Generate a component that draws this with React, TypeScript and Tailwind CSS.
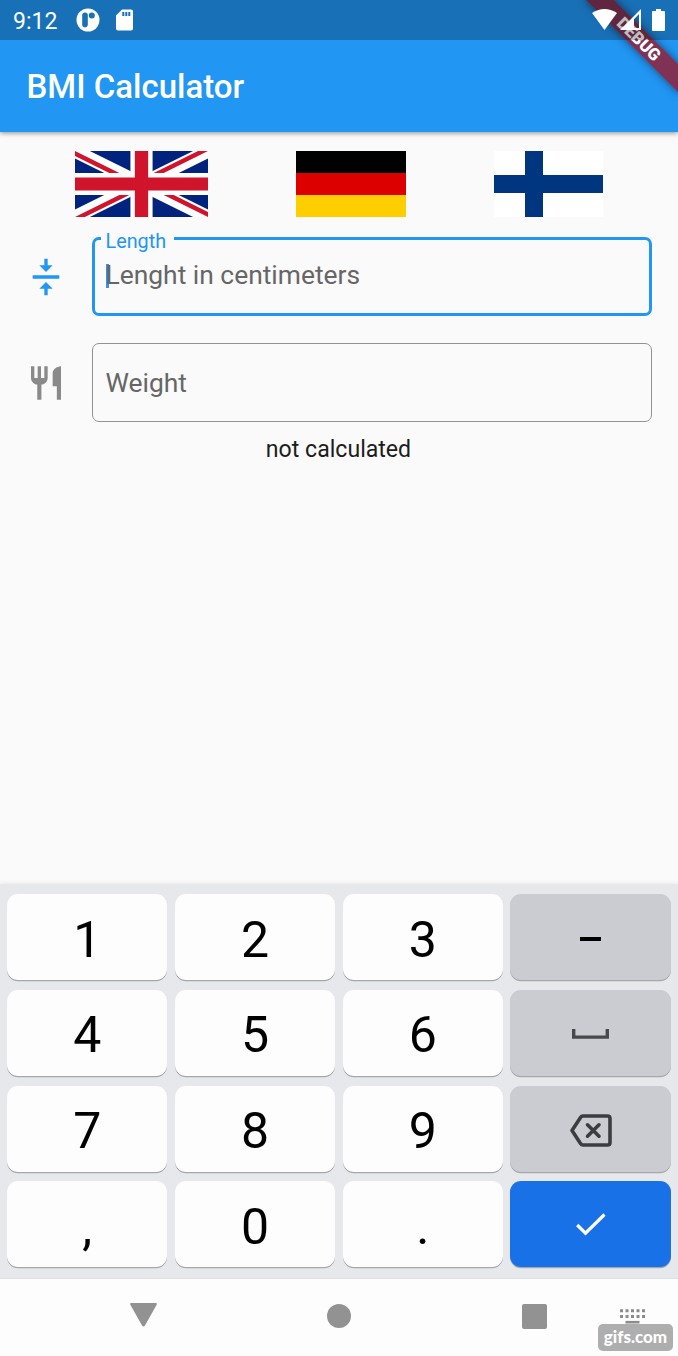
import React from "react";

function StatusBar() {
  return (
    <div className="relative z-20 flex h-[39.6px] items-center bg-black/25 text-white">
      <span className="ml-[13px] mt-[3px] w-[50px] text-[23px] leading-none">9:12</span>
      <svg className="ml-[13px]" width="24" height="24" viewBox="0 0 24 24">
        <circle cx="12" cy="12" r="11.5" fill="white" />
        <rect x="6.2" y="4.6" width="5.6" height="14.6" rx="2.8" fill="#1970b7" />
        <circle cx="15.8" cy="7.6" r="3" fill="#1970b7" />
      </svg>
      <svg className="ml-4" width="17" height="22" viewBox="0 0 17 22">
        <path
          fill="white"
          fillRule="evenodd"
          d="M6 .5H15a2 2 0 0 1 2 2V19.5a2 2 0 0 1-2 2H2a2 2 0 0 1-2-2V6.5ZM6.3 3v4h2V3ZM9.3 3v4h2V3ZM12.3 3v4h2V3Z"
        />
      </svg>
      <svg className="ml-auto" width="25" height="21" viewBox="0 0 25 21">
        <path fill="white" d="M0 4Q12.5-4 25 4L12.5 21Z" />
      </svg>
      <svg className="ml-[3px]" width="22" height="22" viewBox="0 0 22 22">
        <path fill="white" fillRule="evenodd" d="M21 0V21H0ZM19 5L14 10.2V19H19Z" />
      </svg>
      <svg className="ml-[10px] mr-[13px]" width="13" height="22" viewBox="0 0 13 22">
        <path fill="white" d="M4 0h5v2h3a1 1 0 0 1 1 1v18a1 1 0 0 1-1 1H1a1 1 0 0 1-1-1V3a1 1 0 0 1 1-1h3Z" />
      </svg>
    </div>
  );
}

function DebugBanner() {
  return (
    <div className="pointer-events-none absolute right-0 top-0 z-10 h-[132px] w-[132px] overflow-hidden">
      <div className="absolute left-[27px] top-[29px] flex h-5 w-[132px] rotate-45 items-center justify-center bg-[#a01020]/75 text-[16.8px] font-black leading-none text-white shadow-[0_0_9px_rgba(0,0,0,0.5)]">
        DEBUG
      </div>
    </div>
  );
}

function Flags() {
  return (
    <div className="flex h-[66px] pl-[75px]">
      <svg width="133" height="66" viewBox="0 0 60 30" preserveAspectRatio="none">
        <clipPath id="saltire">
          <path d="M30 15H60V30ZM30 15V30H0ZM30 15H0V0ZM30 15V0H60Z" />
        </clipPath>
        <path fill="#00247d" d="M0 0H60V30H0Z" />
        <path d="M0 0L60 30M60 0L0 30" stroke="white" strokeWidth="6" />
        <path d="M0 0L60 30M60 0L0 30" clipPath="url(#saltire)" stroke="#cf142b" strokeWidth="4" />
        <path d="M30 0V30M0 15H60" stroke="white" strokeWidth="10" />
        <path d="M30 0V30M0 15H60" stroke="#cf142b" strokeWidth="6" />
      </svg>
      <div className="ml-[88px] flex w-[110px] flex-col">
        <div className="flex-1 bg-black" />
        <div className="flex-1 bg-[#dd0000]" />
        <div className="flex-1 bg-[#ffce00]" />
      </div>
      <svg className="ml-[88px]" width="109" height="66" viewBox="0 0 109 66">
        <path fill="white" d="M0 0H109V66H0Z" />
        <path fill="#003580" d="M31 0H49V24H109V42H49V66H31V42H0V24H31Z" />
      </svg>
    </div>
  );
}

function Form() {
  return (
    <div className="flex flex-col">
      <div className="mt-5 flex h-[79px] items-center pl-[26px] pr-[26px]">
        <svg width="40" height="40" viewBox="0 0 24 24" fill="#2196f3">
          <path d="M8 19h3v4h2v-4h3l-4-4-4 4zm8-14h-3V1h-2v4H8l4 4 4-4zM4 11v2h16v-2H4z" />
        </svg>
        <div className="relative ml-[26px] h-full flex-1 rounded-[7px] border-[3px] border-[#2196f3]">
          <span className="absolute -top-[9px] left-[5.5px] bg-[#fafafa] pl-[5px] pr-[8px] text-[19.8px] leading-[22px] text-[#2196f3]">
            Length
          </span>
          <div className="flex h-[71px] items-center pl-[10.5px]">
            <span className="h-6 w-[3px] bg-[#3f8cf0]" />
            <span className="-ml-[3px] text-[26.4px] leading-none text-[#666]">Lenght in centimeters</span>
          </div>
        </div>
      </div>
      <div className="mt-[27px] flex h-[79px] items-center pl-[26px] pr-[26px]">
        <svg width="40" height="40" viewBox="0 0 24 24" fill="#8a8a8a">
          <path d="M11 9H9V2H7v7H5V2H3v7c0 2.12 1.66 3.84 3.75 3.97V22h2.5v-9.03C11.34 12.84 13 11.12 13 9V2h-2v7zm5-3v8h2.5v8H21V2c-2.76 0-5 2.24-5 4z" />
        </svg>
        <div className="ml-[26px] flex h-full flex-1 items-center rounded-[7px] border-[1.6px] border-[#929292] pl-[12.5px] pt-[2px] text-[26.4px] leading-none text-[#666]">
          Weight
        </div>
      </div>
      <p className="mt-[14px] pr-px text-center text-[23.1px] leading-[27px] text-[#1c1c1c]">not calculated</p>
    </div>
  );
}

const keyBase = "flex items-center justify-center rounded-[11px] text-[50px] leading-none text-black shadow-[0_1.3px_0_#a5a7aa]";

function Key({ label }: { label: string }) {
  return <div className={`${keyBase} bg-[#fdfdfe] pt-[5px]`}>{label}</div>;
}

function Keyboard() {
  return (
    <div className="grid h-[394px] grid-cols-[repeat(4,160.4px)] grid-rows-[repeat(4,86px)] gap-x-[7.4px] gap-y-[9.6px] bg-[#e7e8eb] pl-[7px] pt-[10.4px] shadow-[0_0_5px_#e0e1e3]">
      <Key label="1" />
      <Key label="2" />
      <Key label="3" />
      <div className={`${keyBase} bg-[#cbccd1]`}>
        <svg className="mt-[3px]" width="21" height="6" viewBox="0 0 21 6">
          <path d="M0 3H21" stroke="black" strokeWidth="4" />
        </svg>
      </div>
      <Key label="4" />
      <Key label="5" />
      <Key label="6" />
      <div className={`${keyBase} bg-[#cbccd1]`}>
        <svg className="mt-[3px]" width="37" height="10" viewBox="0 0 37 10" fill="none" stroke="#46484c" strokeWidth="3.4">
          <path d="M1.7 0V8.1H35.3V0" />
        </svg>
      </div>
      <Key label="7" />
      <Key label="8" />
      <Key label="9" />
      <div className={`${keyBase} bg-[#cbccd1]`}>
        <svg className="mt-[3px]" width="42" height="33" viewBox="0 0 42 33" fill="none" stroke="#3c3d41" strokeWidth="3.6">
          <path d="M13 2H37.5Q40 2 40 4.5V28.5Q40 31 37.5 31H13Q11.5 31 10.5 29.5L2 16.5L10.5 3.5Q11.5 2 13 2Z" strokeLinejoin="round" />
          <path d="M17.5 10.8L29 22.2M29 10.8L17.5 22.2" strokeLinecap="round" />
        </svg>
      </div>
      <Key label="," />
      <Key label="0" />
      <Key label="." />
      <div className={`${keyBase} bg-[#1971e8]`}>
        <svg className="mt-px" width="30" height="23" viewBox="0 0 30 23" fill="none" stroke="white" strokeWidth="3.2">
          <path d="M1.2 12L9.5 20.2L28.5 1.5" />
        </svg>
      </div>
    </div>
  );
}

function NavigationBar() {
  return (
    <div className="relative flex h-[78px] items-start border-t border-[#e0e0e2] bg-[#fdfdfd]">
      <svg className="ml-[129.5px] mt-[24px]" width="27" height="24" viewBox="0 0 27 24" fill="#929292">
        <path d="M1 0H26Q27.4.4 26.5 2L15 22.5Q13.5 24.5 12 22.5L.5 2Q-.4.4 1 0Z" />
      </svg>
      <div className="ml-[170.5px] mt-[25px] h-6 w-6 rounded-full bg-[#929292]" />
      <div className="ml-[171px] mt-[25px] h-[25px] w-[25px] rounded-[2px] bg-[#929292]" />
      <svg className="ml-[73px] mt-[30px]" width="25" height="15" viewBox="0 0 25 15" fill="none" stroke="#8c8c8c">
        <path d="M0 1.8H25M0 7.5H25" strokeWidth="3" strokeDasharray="3 2.5" />
        <path d="M5.5 13.2H19.5" strokeWidth="2.6" />
      </svg>
      <div className="absolute bottom-[5px] right-[5px] flex h-[27px] w-[75px] items-center justify-center rounded-[5px] bg-[#aeaeae] pb-[2px] font-['Lato',sans-serif] text-[17px] font-black leading-none text-white">
        gifs.com
      </div>
    </div>
  );
}

export default function App() {
  return (
    <div className="relative flex h-[1356px] w-[678px] flex-col overflow-hidden bg-[#fafafa] font-['Roboto',sans-serif]">
      <header className="h-[131.5px] bg-[#2196f3] shadow-[0_1px_5px_rgba(0,0,0,0.45)]">
        <StatusBar />
        <h1 className="pl-[26.5px] pt-[27px] text-[33px] font-medium leading-[39px] text-white">BMI Calculator</h1>
        <DebugBanner />
      </header>
      <main className="flex-1 pt-[19.5px]">
        <Flags />
        <Form />
      </main>
      <Keyboard />
      <NavigationBar />
    </div>
  );
}
